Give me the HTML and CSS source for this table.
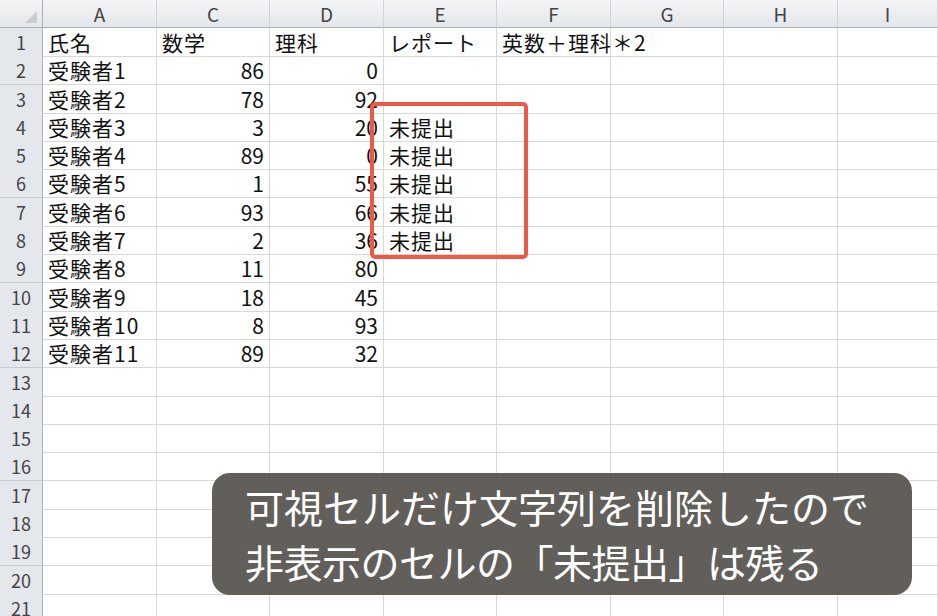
FILE: index.html
```html
<!DOCTYPE html>
<html lang="ja">
<head>
<meta charset="utf-8">
<link rel="stylesheet" href="styles.css">
</head>
<body>
<div class="sheet">
  <div class="row head">
    <div class="corner"><svg class="tri" width="12" height="12" viewBox="0 0 12 12"><polygon points="12,0 12,12 0,12" fill="#c9ccd1"/></svg></div>
    <div class="ch">A</div><div class="ch">C</div><div class="ch">D</div><div class="ch">E</div><div class="ch">F</div><div class="ch">G</div><div class="ch">H</div><div class="ch">I</div>
  </div>
  <div class="row"><div class="rh">1</div><div class="c">氏名</div><div class="c">数学</div><div class="c">理科</div><div class="c">レポート</div><div class="c spill">英数＋理科＊2</div><div class="c"></div><div class="c"></div><div class="c"></div></div>
  <div class="row"><div class="rh">2</div><div class="c">受験者1</div><div class="c n">86</div><div class="c n">0</div><div class="c"></div><div class="c"></div><div class="c"></div><div class="c"></div><div class="c"></div></div>
  <div class="row"><div class="rh">3</div><div class="c">受験者2</div><div class="c n">78</div><div class="c n">92</div><div class="c"></div><div class="c"></div><div class="c"></div><div class="c"></div><div class="c"></div></div>
  <div class="row"><div class="rh">4</div><div class="c">受験者3</div><div class="c n">3</div><div class="c n">20</div><div class="c">未提出</div><div class="c"></div><div class="c"></div><div class="c"></div><div class="c"></div></div>
  <div class="row"><div class="rh">5</div><div class="c">受験者4</div><div class="c n">89</div><div class="c n">0</div><div class="c">未提出</div><div class="c"></div><div class="c"></div><div class="c"></div><div class="c"></div></div>
  <div class="row"><div class="rh">6</div><div class="c">受験者5</div><div class="c n">1</div><div class="c n">55</div><div class="c">未提出</div><div class="c"></div><div class="c"></div><div class="c"></div><div class="c"></div></div>
  <div class="row"><div class="rh">7</div><div class="c">受験者6</div><div class="c n">93</div><div class="c n">66</div><div class="c">未提出</div><div class="c"></div><div class="c"></div><div class="c"></div><div class="c"></div></div>
  <div class="row"><div class="rh">8</div><div class="c">受験者7</div><div class="c n">2</div><div class="c n">36</div><div class="c">未提出</div><div class="c"></div><div class="c"></div><div class="c"></div><div class="c"></div></div>
  <div class="row"><div class="rh">9</div><div class="c">受験者8</div><div class="c n">11</div><div class="c n">80</div><div class="c"></div><div class="c"></div><div class="c"></div><div class="c"></div><div class="c"></div></div>
  <div class="row"><div class="rh">10</div><div class="c">受験者9</div><div class="c n">18</div><div class="c n">45</div><div class="c"></div><div class="c"></div><div class="c"></div><div class="c"></div><div class="c"></div></div>
  <div class="row"><div class="rh">11</div><div class="c">受験者10</div><div class="c n">8</div><div class="c n">93</div><div class="c"></div><div class="c"></div><div class="c"></div><div class="c"></div><div class="c"></div></div>
  <div class="row"><div class="rh">12</div><div class="c">受験者11</div><div class="c n">89</div><div class="c n">32</div><div class="c"></div><div class="c"></div><div class="c"></div><div class="c"></div><div class="c"></div></div>
  <div class="row"><div class="rh">13</div><div class="c"></div><div class="c"></div><div class="c"></div><div class="c"></div><div class="c"></div><div class="c"></div><div class="c"></div><div class="c"></div></div>
  <div class="row"><div class="rh">14</div><div class="c"></div><div class="c"></div><div class="c"></div><div class="c"></div><div class="c"></div><div class="c"></div><div class="c"></div><div class="c"></div></div>
  <div class="row"><div class="rh">15</div><div class="c"></div><div class="c"></div><div class="c"></div><div class="c"></div><div class="c"></div><div class="c"></div><div class="c"></div><div class="c"></div></div>
  <div class="row"><div class="rh">16</div><div class="c"></div><div class="c"></div><div class="c"></div><div class="c"></div><div class="c"></div><div class="c"></div><div class="c"></div><div class="c"></div></div>
  <div class="row"><div class="rh">17</div><div class="c"></div><div class="c"></div><div class="c"></div><div class="c"></div><div class="c"></div><div class="c"></div><div class="c"></div><div class="c"></div></div>
  <div class="row"><div class="rh">18</div><div class="c"></div><div class="c"></div><div class="c"></div><div class="c"></div><div class="c"></div><div class="c"></div><div class="c"></div><div class="c"></div></div>
  <div class="row"><div class="rh">19</div><div class="c"></div><div class="c"></div><div class="c"></div><div class="c"></div><div class="c"></div><div class="c"></div><div class="c"></div><div class="c"></div></div>
  <div class="row"><div class="rh">20</div><div class="c"></div><div class="c"></div><div class="c"></div><div class="c"></div><div class="c"></div><div class="c"></div><div class="c"></div><div class="c"></div></div>
  <div class="row"><div class="rh">21</div><div class="c"></div><div class="c"></div><div class="c"></div><div class="c"></div><div class="c"></div><div class="c"></div><div class="c"></div><div class="c"></div></div>
</div>
<div class="highlight"></div>
<div class="note">
  <p>可視セルだけ文字列を削除したので</p>
  <p class="l2">非表示のセルの「未提出」は残る</p>
</div>
</body>
</html>
```

FILE: styles.css
```css
html, body {
  margin: 0;
  padding: 0;
  width: 938px;
  height: 616px;
  overflow: hidden;
  background: #ffffff;
}
.sheet {
  font-family: "Noto Sans CJK JP", sans-serif;
  color: #111;
}
.row {
  display: grid;
  grid-template-columns: 43px 114px 113px 114px 113px 114px 113px 114px 100px;
  height: 28.3px;
}
.row.head {
  height: 28px;
}
.corner, .ch {
  box-sizing: border-box;
  background: linear-gradient(#f4f5f7, #e3e6ea);
  border-right: 1px solid #d0d4da;
  border-bottom: 1px solid #aab0b8;
}
.corner {
  position: relative;
  border-right: 1px solid #aab0b8;
}
.tri {
  position: absolute;
  right: 5px;
  bottom: 4px;
}
.ch {
  text-align: center;
  font-size: 19px;
  line-height: 27px;
  color: #444;
  font-family: "Noto Sans CJK JP", sans-serif;
  font-weight: 400;
}
.rh {
  box-sizing: border-box;
  background: #e4e7ec;
  border-right: 1px solid #aab0b8;
  border-bottom: 1px solid #c6cbd2;
  text-align: center;
  font-size: 18px;
  line-height: 28px;
  color: #444;
}
.c {
  box-sizing: border-box;
  border-right: 1px solid #d8d8d8;
  border-bottom: 1px solid #d8d8d8;
  font-size: 21px;
  letter-spacing: 1px;
  line-height: 28px;
  padding: 0 5px;
  white-space: nowrap;
  overflow: hidden;
}
.c.spill {
  overflow: visible;
  position: relative;
  z-index: 1;
}
.c.n {
  text-align: right;
  padding-right: 5px;
  letter-spacing: 0;
}
.highlight {
  position: absolute;
  left: 370px;
  top: 102px;
  width: 158px;
  height: 157px;
  box-sizing: border-box;
  border: 4px solid #ec5a45;
  border-radius: 5px;
}
.note {
  position: absolute;
  left: 212px;
  top: 473px;
  width: 700px;
  height: 122px;
  box-sizing: border-box;
  background: rgba(92, 88, 84, 0.96);
  border-radius: 18px;
  padding: 6px 0 0 33px;
  color: #ffffff;
  font-family: "Noto Sans CJK JP", sans-serif;
  font-size: 39px;
  line-height: 55px;
}
.note p {
  margin: 0;
  white-space: nowrap;
}
.note .l2 {
  letter-spacing: -0.5px;
}
```
